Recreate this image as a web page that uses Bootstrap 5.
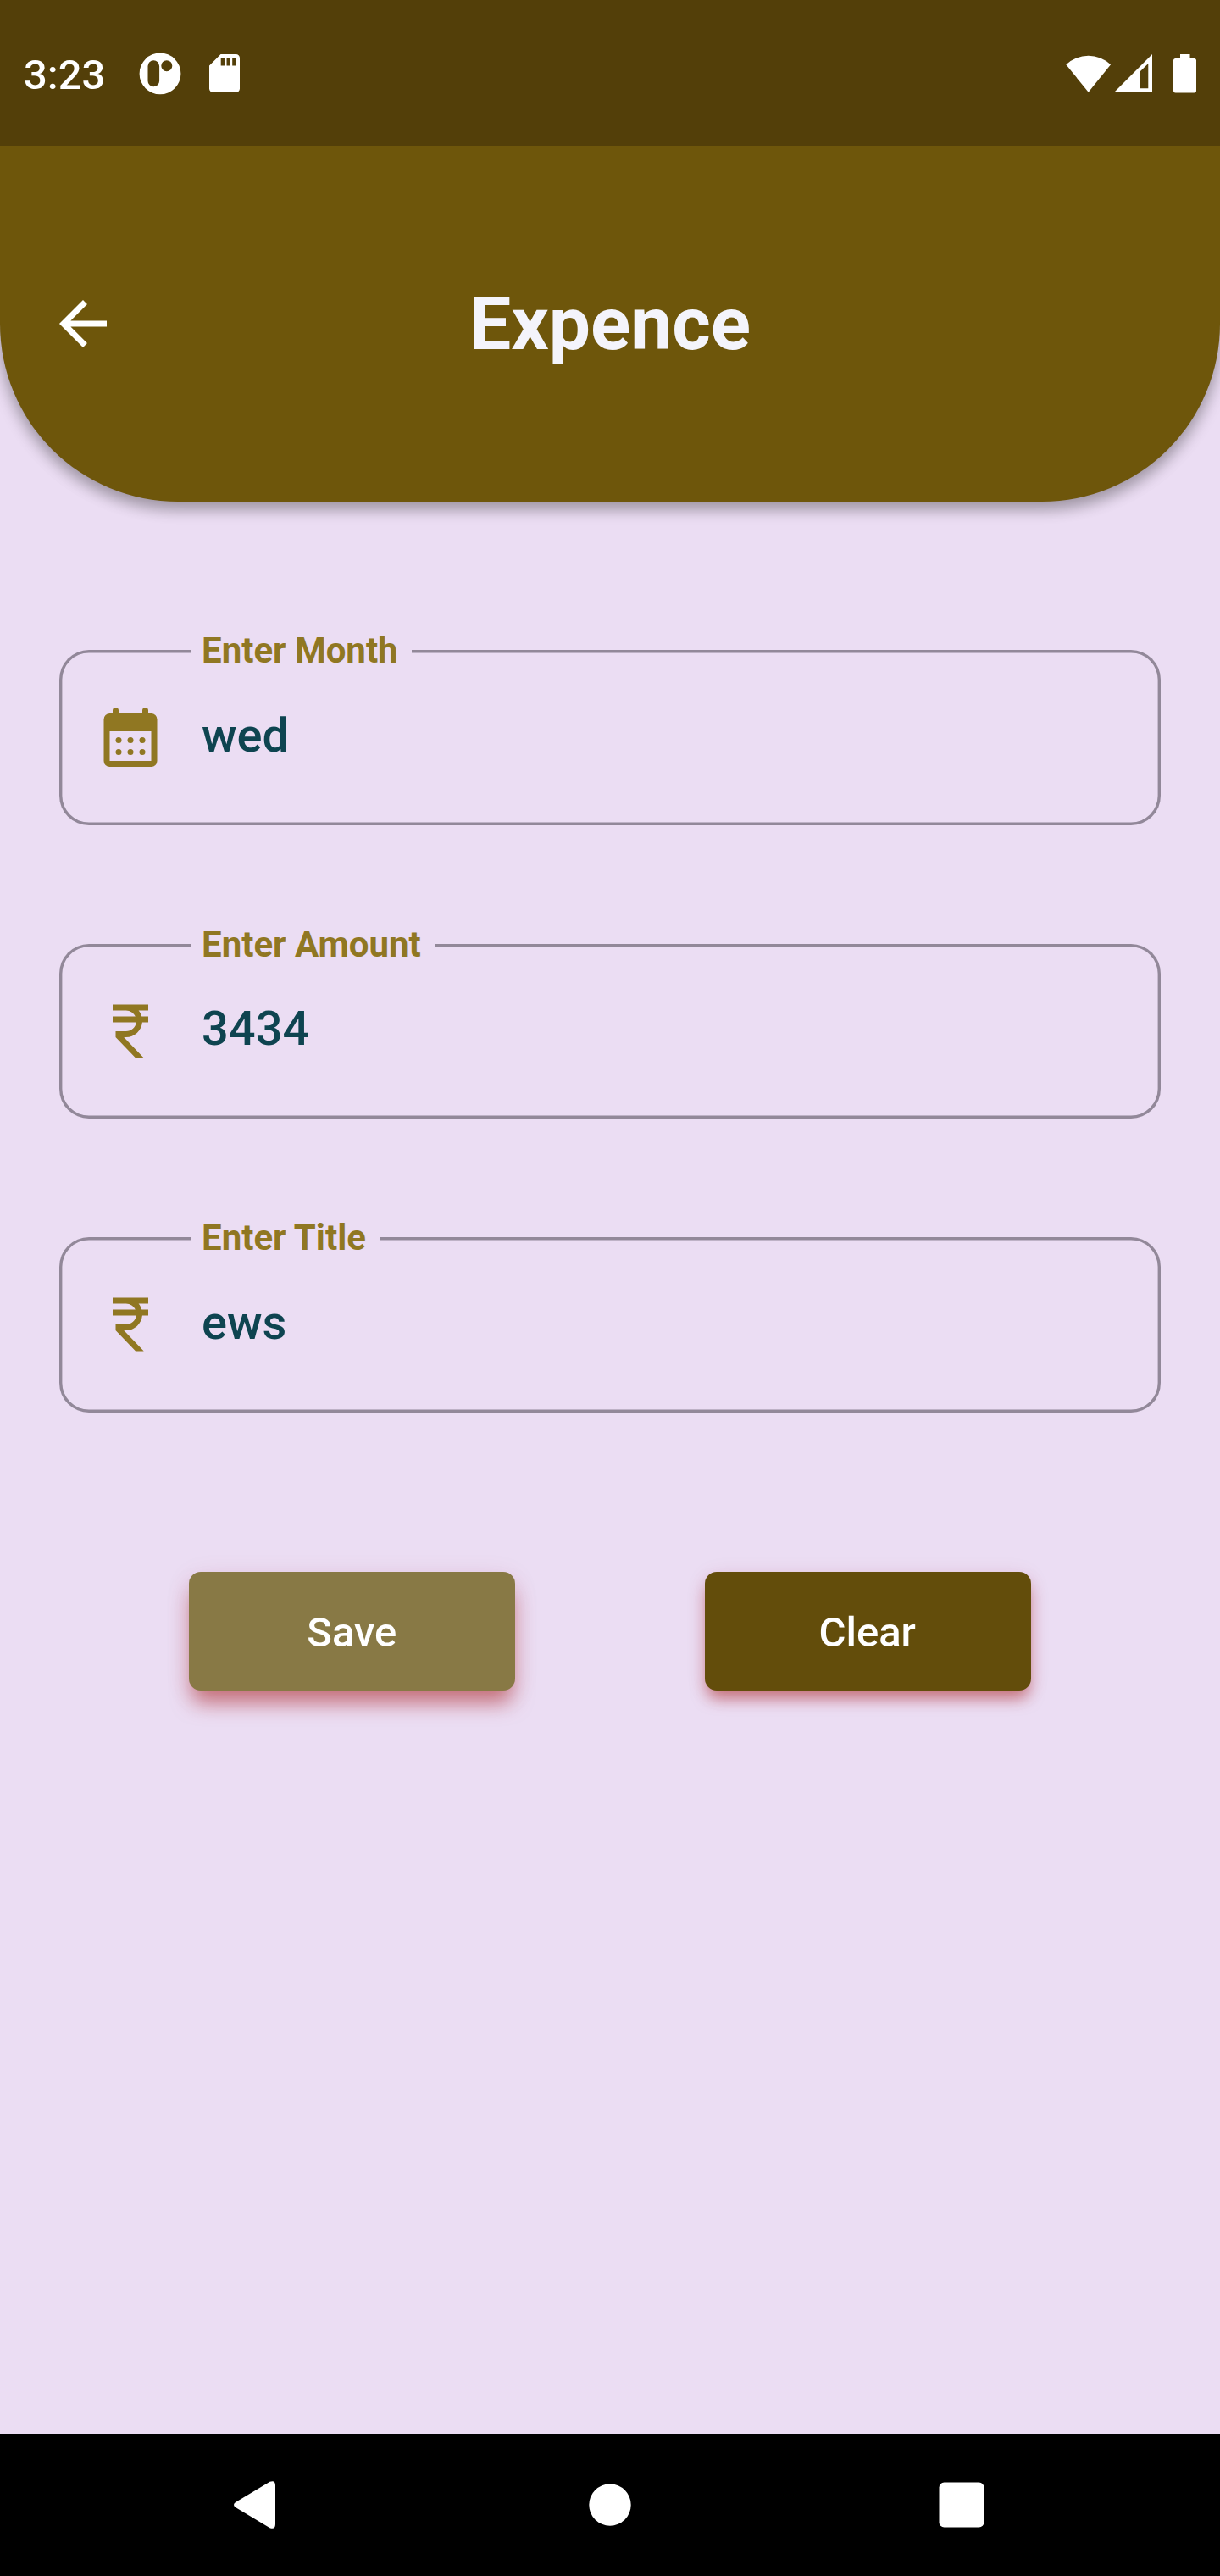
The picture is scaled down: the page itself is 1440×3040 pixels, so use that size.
<!DOCTYPE html>
<html lang="en">
<head>
<meta charset="utf-8">
<meta name="viewport" content="width=device-width, initial-scale=1">
<title>Expence</title>
<link href="https://cdn.jsdelivr.net/npm/bootstrap@5.3.0/dist/css/bootstrap.min.css" rel="stylesheet">
<style>
  body { font-family: Roboto, sans-serif; background: #ebddf3; line-height: 1; }
  svg { display: block; flex: none; }
  .screen { width: 1440px; height: 3040px; background: #ebddf3; }
  .status-bar { height: 172px; background: #533f09; padding: 1px 28px 0; color: #fff; position: relative; z-index: 1; }
  .status-bar .clock { font-size: 49px; font-weight: 500; width: 135.500px; padding-top: 3px; }
  .sd-card { margin-left: 33.500px; }
  .signal { margin-left: 3px; }
  .battery { margin-left: 25px; }
  .app-header { height: 420px; background: #6e560b; border-radius: 0 0 210px 210px; padding: 0 56px;
    box-shadow: 0 10px 16px rgba(0,0,0,.25), 0 2px 26px rgba(0,0,0,.14); }
  .app-header h1 { font-size: 87.5px; font-weight: 700; color: #f4f4fb; line-height: 1; padding-top: 2px; }
  .side { width: 84px; }
  .form-area { padding: 175px 70px 0; gap: 140px; }
  .outlined { height: 206.5px; border-radius: 35px; box-shadow: inset 0 0 0 3.4px #928899; padding-left: 42px; }
  .outlined label { left: 156px; top: -21px; background: #ebddf3; font-size: 42px; line-height: 44px; font-weight: 700; color: #907722; padding: 0 16.500px 0 12px; white-space: nowrap; }
  .outlined .field-value { font-size: 56px; font-weight: 500; color: #0e4450; margin-left: 42px; padding-bottom: 5px; }
  .icon-gold { fill: #907722; }
  .actions { margin-top: 188.5px; }
  .action-btn { width: 385px; height: 140px; border: 0; border-radius: 14px; color: #fff; font-size: 49px; font-weight: 500; padding: 2px 1px 0 0; line-height: 1; }
  .action-save { background: #887945; box-shadow: 0 18px 24px -4px rgba(170,30,30,.55), 0 6px 32px rgba(170,30,60,.09); }
  .action-clear { background: #634d0b; box-shadow: 0 12px 18px -3px rgba(170,30,30,.55), 0 4px 26px rgba(170,30,60,.09); }
  .nav-keys { height: 168px; background: #000; padding: 0 276px; }
  .key-home { margin-left: 370px; }
  .key-recent { margin-left: 363px; }
</style>
</head>
<body>
<div class="screen d-flex flex-column overflow-hidden">
  <header class="status-bar d-flex align-items-center">
    <span class="clock">3:23</span>
    <svg width="50" height="50" viewBox="0 0 50 50" fill="#fff"><path fill-rule="evenodd" d="M25 .5a24.4 24.4 0 1 0 0 48.8a24.4 24.4 0 1 0 0-48.8zM17.3 9.2a6.8 6.8 0 0 1 6.8 6.8v17.5a6.8 6.8 0 0 1-13.6 0V16a6.8 6.8 0 0 1 6.8-6.8zM32.8 9.2a6.5 6.5 0 1 1 0 13a6.5 6.5 0 1 1 0-13z"/></svg>
    <svg class="sd-card" width="36" height="45" viewBox="0 0 36 45" fill="#fff"><path fill-rule="evenodd" d="M13.5 0H31.500a4.500 4.500 0 0 1 4.500 4.500V40.500a4.500 4.500 0 0 1-4.500 4.500H4.500a4.500 4.500 0 0 1-4.500-4.500V13.500zM13.700 4.500V13.500H18V4.500zM20.500 4.500V13.500H24.800V4.500zM27.200 4.500V13.500H31.500V4.500z"/></svg>
    <svg class="ms-auto" width="54" height="45" viewBox="0 0 54 45" fill="#fff"><path d="M0.300 12.300A38.500 38.500 0 0 1 53 12.300L26.700 44.700z"/></svg>
    <svg class="signal" width="45" height="45" viewBox="0 0 45 45" fill="#fff"><path fill-rule="evenodd" d="M45 0V45H0zM31 20V40.300H40.300V11z"/></svg>
    <svg class="battery" width="27" height="46" viewBox="0 0 27 46" fill="#fff"><path d="M8 0H19.500V5H24.500A2.500 2.500 0 0 1 27 7.500V43A2.500 2.500 0 0 1 24.500 45.500H2.500A2.500 2.500 0 0 1 0 43V7.500A2.500 2.500 0 0 1 2.500 5H8z"/></svg>
  </header>

  <div class="app-header d-flex align-items-center justify-content-between flex-shrink-0">
    <svg class="side" width="84" height="84" viewBox="0 0 24 24" fill="#fff"><path d="M20 11H7.830l5.590-5.590L12 4l-8 8 8 8 1.410-1.410L7.830 13H20v-2z"/></svg>
    <h1 class="m-0">Expence</h1>
    <div class="side"></div>
  </div>

  <main class="flex-grow-1">
    <form class="form-area d-flex flex-column">
      <div class="outlined position-relative d-flex align-items-center">
        <label class="position-absolute">Enter Month</label>
        <svg class="icon-gold" width="84" height="84" viewBox="0 0 24 24"><path fill-rule="evenodd" d="M5 4H6V3a1 1 0 0 1 2 0V4H16V3a1 1 0 0 1 2 0V4H19a2 2 0 0 1 2 2V20a2 2 0 0 1-2 2H5a2 2 0 0 1-2-2V6a2 2 0 0 1 2-2zM5 10V20H19V10z"/><circle cx="8" cy="13" r="1"/><circle cx="12" cy="13" r="1"/><circle cx="16" cy="13" r="1"/><circle cx="8" cy="17" r="1"/><circle cx="12" cy="17" r="1"/><circle cx="16" cy="17" r="1"/></svg>
        <span class="field-value">wed</span>
      </div>
      <div class="outlined position-relative d-flex align-items-center">
        <label class="position-absolute">Enter Amount</label>
        <svg class="icon-gold" width="84" height="84" viewBox="0 0 24 24"><path d="M13.660 7C13.100 5.820 11.900 5 10.500 5L6 5V3h12v2l-3.260 0c.48.58.84 1.260 1.050 2L18 7v2l-2.020 0c-.25 2.800-2.610 5-5.480 5H9.770l6.730 7h-2.770L7 14v-2h3.500c1.760 0 3.220-1.300 3.460-3L6 9V7L13.660 7z"/></svg>
        <span class="field-value">3434</span>
      </div>
      <div class="outlined position-relative d-flex align-items-center">
        <label class="position-absolute">Enter Title</label>
        <svg class="icon-gold" width="84" height="84" viewBox="0 0 24 24"><path d="M13.660 7C13.100 5.820 11.900 5 10.500 5L6 5V3h12v2l-3.260 0c.48.58.84 1.260 1.050 2L18 7v2l-2.020 0c-.25 2.800-2.610 5-5.480 5H9.770l6.730 7h-2.770L7 14v-2h3.500c1.760 0 3.220-1.300 3.460-3L6 9V7L13.660 7z"/></svg>
        <span class="field-value">ews</span>
      </div>
    </form>
    <div class="actions d-flex justify-content-evenly">
      <button type="button" class="btn action-btn action-save">Save</button>
      <button type="button" class="btn action-btn action-clear">Clear</button>
    </div>
  </main>

  <nav class="nav-keys d-flex align-items-center flex-shrink-0">
    <svg width="49" height="56" viewBox="0 0 49 56" fill="#fff"><path d="M2 25L42.500.8Q49-1.500 49 5V51Q49 57.500 42.500 55.200L2 31Q-2 28 2 25z"/></svg>
    <svg class="key-home" width="50" height="50" viewBox="0 0 50 50" fill="#fff"><circle cx="25" cy="25" r="24.700"/></svg>
    <svg class="key-recent" width="54" height="54" viewBox="0 0 54 54" fill="#fff"><rect x=".5" y=".5" width="53" height="53" rx="6"/></svg>
  </nav>
</div>
<script src="https://cdn.jsdelivr.net/npm/bootstrap@5.3.0/dist/js/bootstrap.bundle.min.js"></script>
</body>
</html>
